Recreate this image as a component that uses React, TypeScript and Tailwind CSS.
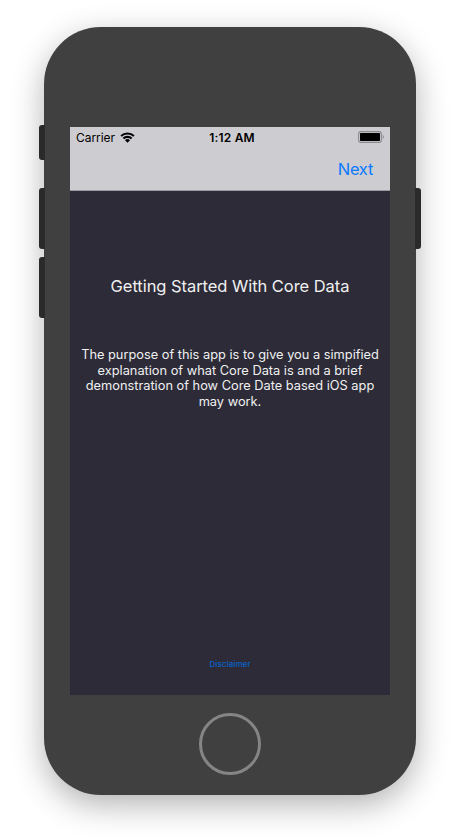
import React from "react";

const sideButton = "absolute w-1.5 bg-[#2a2a2a]";

function WifiIcon() {
  return (
    <svg className="mb-px block h-[11px] w-[15px]" viewBox="0 0 15 11">
      <g fill="none" stroke="#000" strokeWidth="2.1">
        <path d="M1.1 4.1a9.1 9.1 0 0 1 12.8 0" />
        <path d="M3.4 6.6a5.8 5.8 0 0 1 8.2 0" />
      </g>
      <path d="M7.5 10.8 5 8.3a3.6 3.6 0 0 1 5 0z" fill="#000" />
    </svg>
  );
}

function BatteryIcon() {
  return (
    <svg className="mb-[2px] block h-3 w-[27px]" viewBox="0 0 27 12">
      <rect x="0.6" y="0.6" width="22.8" height="10.8" rx="2.4" fill="none" stroke="#8b8a8f" strokeWidth="1.1" />
      <rect x="2" y="2" width="20" height="8" rx="0.8" fill="#000" />
      <path d="M24.7 4v4c1.6-.6 1.6-3.4 0-4z" fill="#8b8a8f" />
    </svg>
  );
}

function StatusBar() {
  return (
    <div className="flex h-5 items-center justify-between pt-px pr-[5px] pl-1.5 text-[12px] leading-5 text-black">
      <div className="flex flex-1 items-center gap-[5px]">
        <span className="tracking-[-0.05px]">Carrier</span>
        <WifiIcon />
      </div>
      <span className="pl-[3px] text-center font-semibold tracking-[0.2px] whitespace-nowrap">1:12 AM</span>
      <div className="flex flex-1 justify-end">
        <BatteryIcon />
      </div>
    </div>
  );
}

export default function App() {
  return (
    <main className="flex h-[838px] w-[460px] justify-center overflow-hidden bg-white pt-[27px] font-['Inter','Liberation_Sans',sans-serif]">
      <div className="relative h-[768px] w-[372px]">
        <i className={`${sideButton} top-[98px] -left-[5px] h-[35px] rounded-l-[3px]`} />
        <i className={`${sideButton} top-[161px] -left-[5px] h-[61px] rounded-l-[3px]`} />
        <i className={`${sideButton} top-[230px] -left-[5px] h-[61px] rounded-l-[3px]`} />
        <i className={`${sideButton} top-[161px] -right-[5px] h-[61px] rounded-r-[3px]`} />
        <div className="flex h-full flex-col items-center rounded-[57px] bg-[#404040] pt-[100px] shadow-[0_10px_32px_rgba(0,0,0,0.3)]">
          <section className="flex h-[568px] w-80 flex-col bg-[#2c2b37]">
            <header className="h-16 border-b border-[#9a999f] bg-[#cdccd1]">
              <StatusBar />
              <div className="flex h-11 justify-end pr-[17px]">
                <button className="text-[16.5px] leading-[45px] tracking-[-0.3px] text-[#087aff]">Next</button>
              </div>
            </header>
            <div className="flex flex-1 flex-col items-center text-center text-[#f0f0f1]">
              <h1 className="mt-[84px] text-[16.5px] leading-[22px] tracking-[-0.05px] whitespace-nowrap">Getting Started With Core Data</h1>
              <p className="mt-[50px] text-[12.8px] leading-[15.5px] whitespace-nowrap">
                The purpose of this app is to give you a simpified
                <br />
                explanation of what Core Data is and a brief
                <br />
                demonstration of how Core Date based iOS app
                <br />
                may work.
              </p>
              <button className="mt-auto mb-[25px] text-[8px] leading-3 font-medium tracking-[0.1px] text-[#0b63cc]">Disclaimer</button>
            </div>
          </section>
          <div className="mt-[18px] size-[62px] rounded-full border-[3px] border-[#858585]" />
        </div>
      </div>
    </main>
  );
}
